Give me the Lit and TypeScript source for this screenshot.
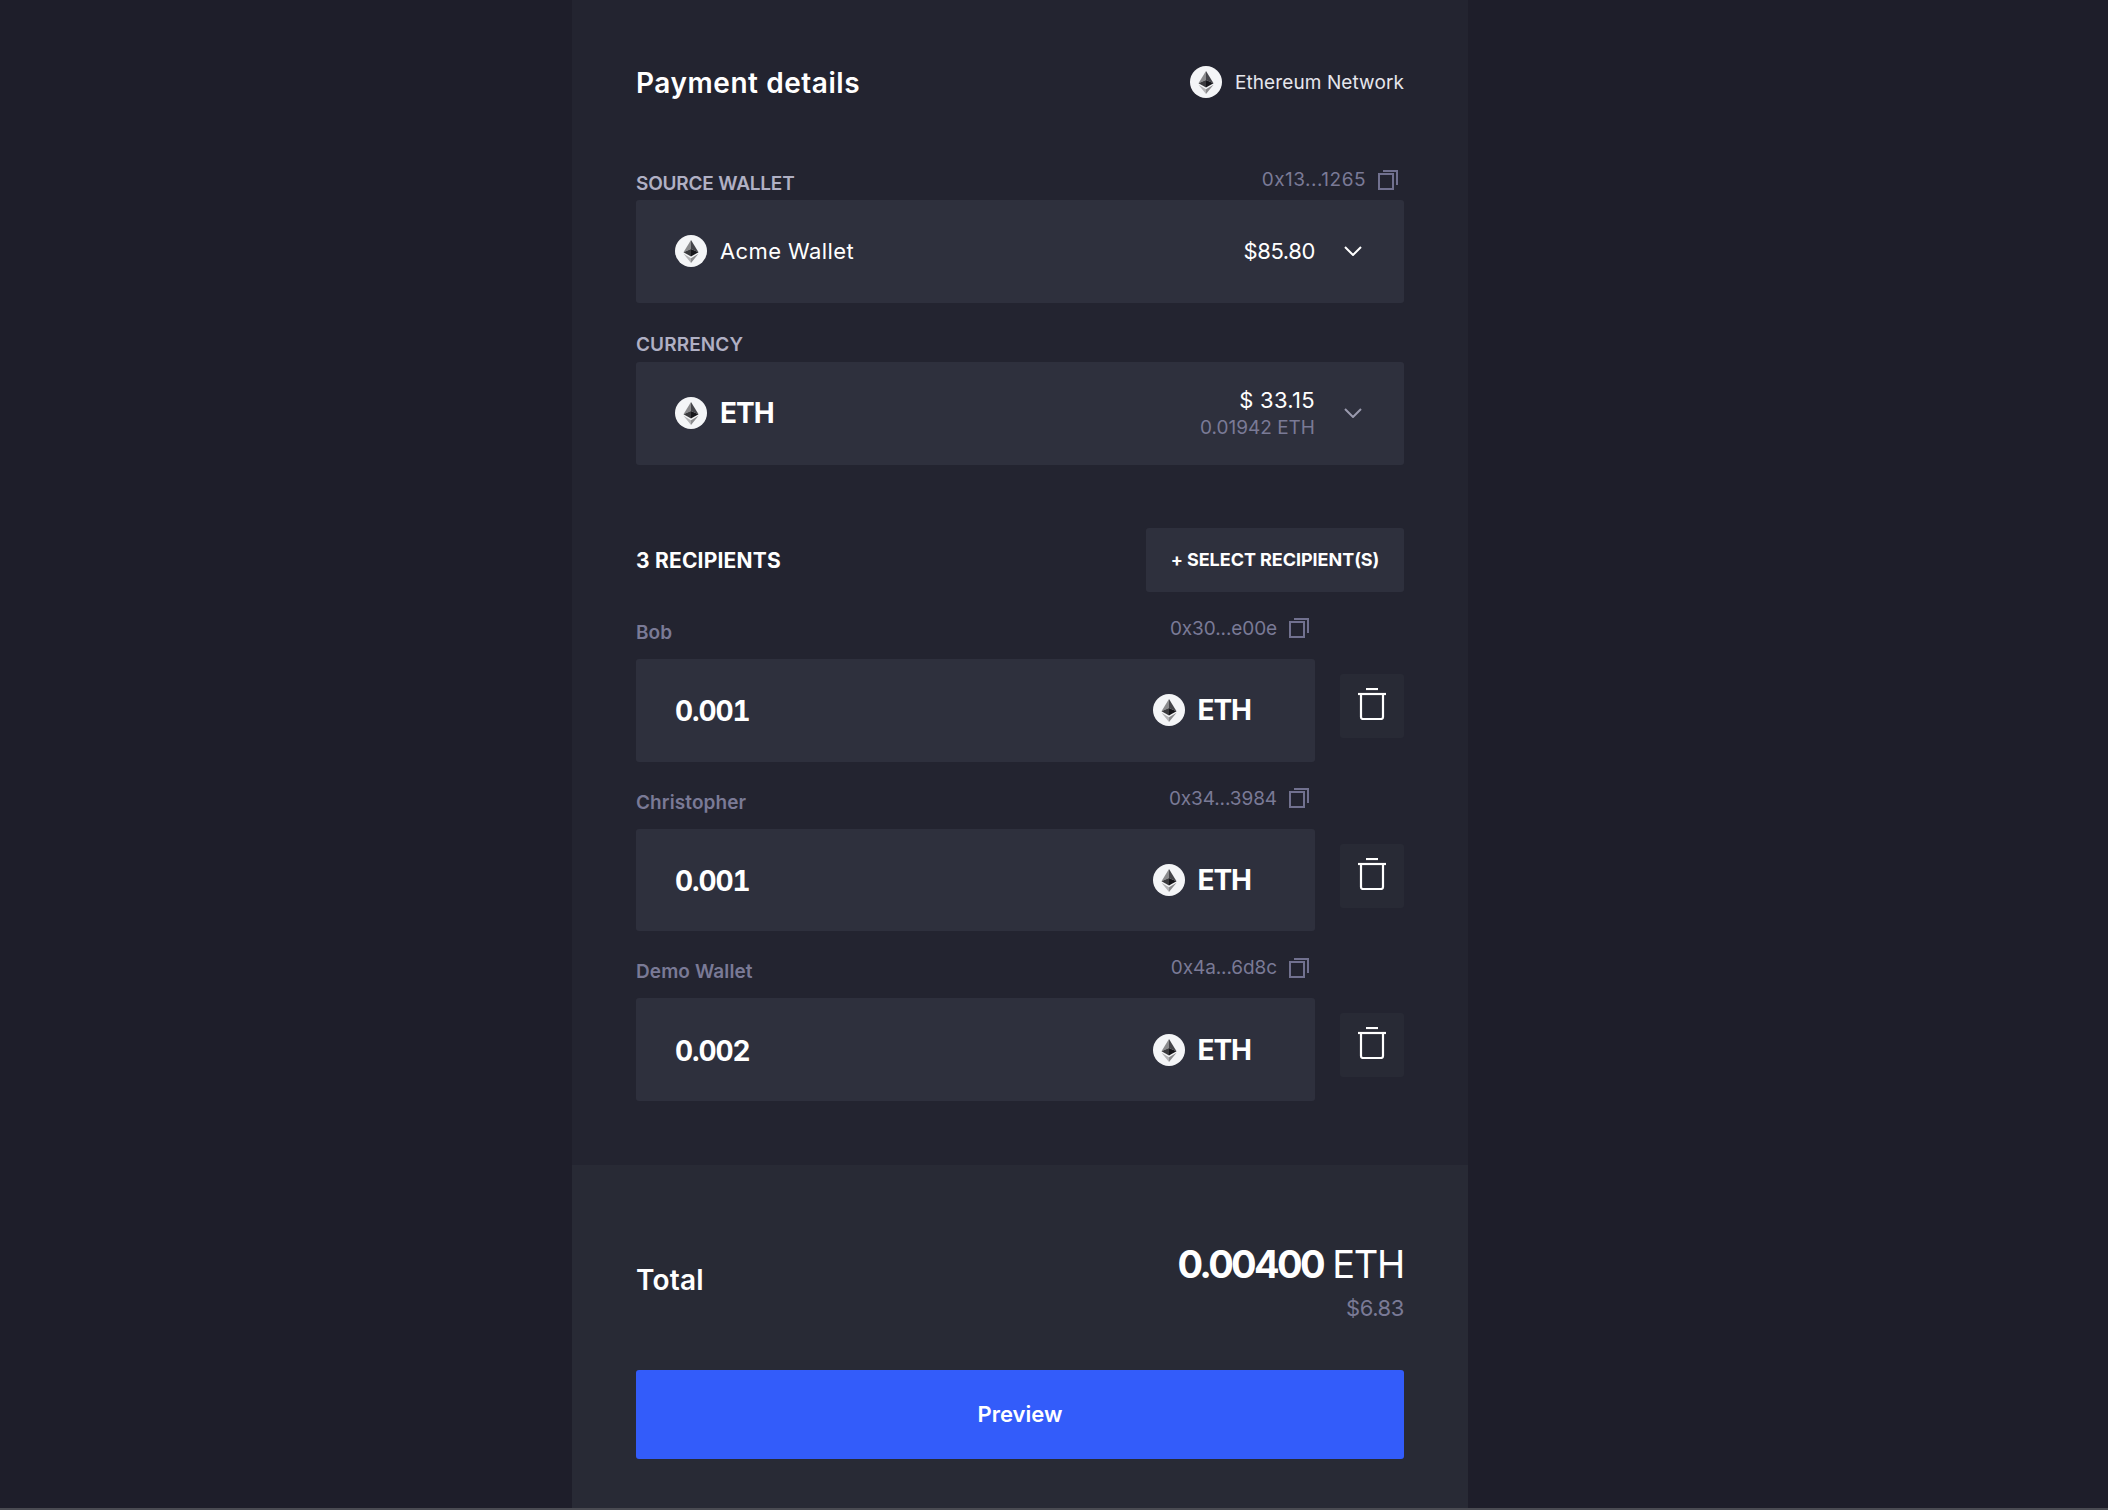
import { LitElement, html, css, svg } from 'lit';
import { customElement } from 'lit/decorators.js';

const recipients = [
  { name: 'Bob', address: '0x30...e00e', amount: '0.001' },
  { name: 'Christopher', address: '0x34...3984', amount: '0.001' },
  { name: 'Demo Wallet', address: '0x4a...6d8c', amount: '0.002' },
];

const ethIcon = html`<svg class="eth" viewBox="0 0 32 32">
  <circle cx="16" cy="16" r="16" fill="#f4f5f7"></circle>
  ${svg`<polygon points="16,5 16,14 8.5,17.2" fill="#8a8a8c"></polygon>
  <polygon points="16,5 23.5,17.2 16,14" fill="#45454a"></polygon>
  <polygon points="16,14 8.5,17.2 16,21.5" fill="#3a3a3d"></polygon>
  <polygon points="16,14 23.5,17.2 16,21.5" fill="#16161a"></polygon>
  <polygon points="8.5,18.7 16,23.2 16,28" fill="#b4b4b6"></polygon>
  <polygon points="23.5,18.7 16,23.2 16,28" fill="#8a8a8c"></polygon>`}
</svg>`;

const copyIcon = html`<svg class="copy" viewBox="0 0 20 20" fill="none" stroke="#71718f" stroke-width="2">
  <rect x="1" y="4" width="14" height="15"></rect>
  <path d="M5 1h14v14"></path>
</svg>`;

const chevron = (color: string) => html`<svg class="chevron" viewBox="0 0 18 10" fill="none" stroke=${color} stroke-width="2">
  <path d="M1 1l8 8 8-8"></path>
</svg>`;

const trashIcon = html`<svg class="trash" viewBox="0 0 30 32" fill="none" stroke="#fff" stroke-width="2.2">
  <path d="M9 1h12"></path>
  <path d="M1 6h28"></path>
  <path d="M4 6v23a2 2 0 0 0 2 2h18a2 2 0 0 0 2-2V6"></path>
</svg>`;

@customElement('app-root')
export class AppRoot extends LitElement {
  render() {
    return html`
      <div class="panel">
        <div class="main">
          <div class="header">
            <h1>Payment details</h1>
            <div class="network">${ethIcon}<span>Ethereum Network</span></div>
          </div>

          <div class="label-row source-label">
            <span class="label">SOURCE WALLET</span>
            <span class="address source-address">0x13...1265${copyIcon}</span>
          </div>
          <div class="field">
            ${ethIcon}
            <span class="wallet">Acme Wallet</span>
            <span class="balance">$85.80</span>
            ${chevron('#ffffff')}
          </div>

          <div class="label-row currency-label">
            <span class="label currency">CURRENCY</span>
          </div>
          <div class="field">
            ${ethIcon}
            <span class="symbol">ETH</span>
            <span class="stack">
              <span class="usd">$ 33.15</span>
              <span class="eth-amount">0.01942 ETH</span>
            </span>
            ${chevron('#9a9aae')}
          </div>

          <div class="recipients-head">
            <span class="count">3 RECIPIENTS</span>
            <button class="select">+ SELECT RECIPIENT(S)</button>
          </div>

          ${recipients.map(
            (r) => html`
              <div class="recipient">
                <div class="recipient-main">
                  <div class="label-row recipient-label">
                    <span class="name">${r.name}</span>
                    <span class="address">${r.address}${copyIcon}</span>
                  </div>
                  <div class="field">
                    <span class="amount">${r.amount}</span>
                    ${ethIcon}
                    <span class="symbol">ETH</span>
                  </div>
                </div>
                <button class="delete">${trashIcon}</button>
              </div>
            `
          )}
        </div>

        <div class="footer">
          <div class="total-row">
            <span class="total">Total</span>
            <div class="total-values">
              <div class="total-eth"><b>0.00400</b> ETH</div>
              <div class="total-usd">$6.83</div>
            </div>
          </div>
          <button class="preview">Preview</button>
        </div>
      </div>
    `;
  }

  static styles = css`
    :host {
      display: block;
      height: 1510px;
      background: #1e1e2a;
      border-bottom: 2px solid #4a4b52;
      box-sizing: border-box;
      font-family: Inter, 'Liberation Sans', sans-serif;
      color: #fff;
      overflow: hidden;
    }
    .panel {
      width: 896px;
      height: 1508px;
      margin-left: 572px;
      background: #232430;
      display: flex;
      flex-direction: column;
    }
    .main {
      padding: 64px 64px 64px;
      height: 1165px;
      box-sizing: border-box;
    }
    .header {
      display: flex;
      justify-content: space-between;
      align-items: center;
      height: 36px;
    }
    h1 {
      margin: 0;
      font-size: 28px;
      font-weight: 600;
      letter-spacing: 0.55px;
      padding-top: 2px;
    }
    .network {
      display: flex;
      align-items: center;
      gap: 13px;
      font-size: 19px;
      color: #e6e6ec;
      letter-spacing: 0.1px;
    }
    .network span {
      padding-top: 1px;
    }
    .eth {
      width: 32px;
      height: 32px;
      flex: none;
    }
    .label-row {
      display: flex;
      justify-content: space-between;
      align-items: flex-end;
    }
    .source-label {
      height: 100px;
      padding-bottom: 5px;
      box-sizing: border-box;
    }
    .currency-label {
      height: 59.33px;
      padding-bottom: 6px;
      box-sizing: border-box;
    }
    .recipient-label {
      height: 67px;
      padding-bottom: 15px;
      box-sizing: border-box;
    }
    .label {
      font-size: 19px;
      font-weight: 600;
      color: #b0b0c4;
      letter-spacing: -0.2px;
    }
    .currency {
      letter-spacing: 0.1px;
    }
    .name {
      font-size: 19px;
      font-weight: 600;
      color: #7a7a96;
      letter-spacing: 0.1px;
    }
    .address {
      display: flex;
      align-items: center;
      font-size: 19px;
      color: #7a7a96;
      letter-spacing: -0.1px;
      margin-right: 6px;
      margin-bottom: 4px;
    }
    .source-address {
      letter-spacing: 0.5px;
    }
    .copy {
      width: 20px;
      height: 20px;
      margin-left: 12px;
    }
    .field {
      height: 102.67px;
      box-sizing: border-box;
      background: #2e303d;
      border-radius: 3px;
      padding: 0 42px 0 39px;
      display: flex;
      align-items: center;
    }
    .wallet {
      margin-left: 13px;
      font-size: 22px;
      letter-spacing: 0.4px;
      flex: 1;
    }
    .balance {
      font-size: 22px;
      letter-spacing: -0.4px;
    }
    .chevron {
      width: 18px;
      height: 10px;
      margin-left: 29px;
    }
    .symbol {
      margin-left: 12px;
      font-size: 28px;
      font-weight: 700;
      letter-spacing: -1px;
    }
    .field > .symbol:nth-child(2) {
      flex: 1;
      margin-left: 13px;
    }
    .stack {
      display: flex;
      flex-direction: column;
      align-items: flex-end;
      gap: 3px;
      margin-top: -1px;
    }
    .usd {
      font-size: 22px;
      letter-spacing: 0.3px;
    }
    .eth-amount {
      font-size: 19px;
      color: #7a7a96;
      letter-spacing: 0;
    }
    .recipients-head {
      margin-top: 63.33px;
      height: 64px;
      display: flex;
      justify-content: space-between;
      align-items: center;
    }
    .count {
      font-size: 21px;
      font-weight: 700;
      letter-spacing: 0.2px;
      padding-top: 2px;
    }
    button {
      font-family: inherit;
      color: #fff;
      border: none;
      cursor: pointer;
    }
    .select {
      width: 258px;
      height: 64px;
      background: #2e303d;
      border-radius: 3px;
      font-size: 18px;
      font-weight: 700;
      letter-spacing: -0.05px;
      padding: 0;
    }
    .recipient {
      display: flex;
      gap: 25px;
    }
    .recipient-main {
      width: 679px;
    }
    .recipient .field {
      padding-right: 64px;
    }
    .amount {
      flex: 1;
      font-size: 28px;
      font-weight: 700;
      font-variant-numeric: tabular-nums;
      letter-spacing: -1.1px;
      padding-top: 2px;
    }
    .delete {
      width: 64px;
      height: 64px;
      margin-top: 82px;
      background: #282a35;
      border-radius: 3px;
      padding: 0 0 4px;
      display: flex;
      align-items: center;
      justify-content: center;
    }
    .trash {
      width: 30px;
      height: 32px;
    }
    .footer {
      flex: 1;
      background: #282a35;
      padding: 0 64px;
    }
    .total-row {
      height: 205px;
      display: flex;
      justify-content: space-between;
      align-items: center;
      padding-top: 25px;
      box-sizing: border-box;
    }
    .total {
      font-size: 28px;
      font-weight: 600;
      letter-spacing: 0.2px;
    }
    .total-values {
      text-align: right;
      padding-top: 2px;
    }
    .total-eth {
      font-size: 38px;
      letter-spacing: -1.3px;
    }
    .total-eth b {
      font-weight: 700;
      letter-spacing: -2.7px;
    }
    .total-usd {
      font-size: 22px;
      color: #7a7a96;
      letter-spacing: -0.4px;
      margin-top: 8px;
    }
    .preview {
      display: block;
      width: 100%;
      height: 89px;
      background: #335cfa;
      border-radius: 3px;
      font-size: 22px;
      font-weight: 600;
      padding: 0 0 2px;
    }
  `;
}
